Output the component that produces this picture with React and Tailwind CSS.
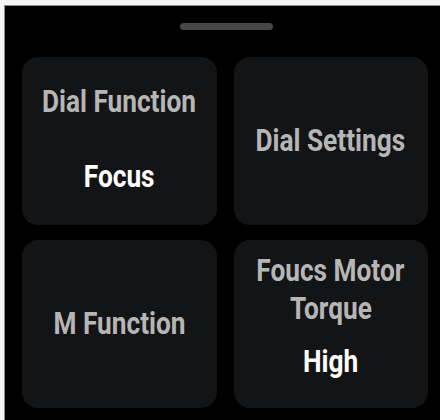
import React from 'react';

const FONT = { fontFamily: 'Roboto, "Noto Sans", sans-serif' };

const Line = ({ children, className = '' }) => (
  <span className={`inline-block whitespace-nowrap scale-x-[0.82] text-[32px] leading-[38px] font-bold ${className}`}>
    {children}
  </span>
);

const Card = ({ children, className = '' }) => (
  <div className={`h-[168px] rounded-[16px] bg-[#131416] flex flex-col items-center text-center ${className}`}>
    {children}
  </div>
);

export default function App() {
  return (
    <div className="w-[440px] h-[420px] bg-[#f4f4f4] pt-[5px] pl-[4px] overflow-hidden" style={FONT}>
      <div className="w-full h-full bg-black border-t border-l border-[#8f8f8f] pl-[17px] pr-[12px]">
        <div className="pt-[17px] flex justify-center pl-[2px]">
          <div className="w-[93px] h-[7px] rounded-full bg-[#474747]" />
        </div>
        <div className="mt-[27px] grid grid-cols-2 gap-x-[17px] gap-y-[15px]">
          <Card className="pt-[25px]">
            <Line className="text-[#b6b6b6]">Dial Function</Line>
            <Line className="mt-[37px] text-white">Focus</Line>
          </Card>
          <Card className="pt-[64px]">
            <Line className="text-[#b6b6b6]">Dial Settings</Line>
          </Card>
          <Card className="pt-[64px]">
            <Line className="text-[#b6b6b6]">M Function</Line>
          </Card>
          <Card className="pt-[11px]">
            <Line className="text-[#b6b6b6]">Foucs Motor</Line>
            <Line className="text-[#b6b6b6]">Torque</Line>
            <Line className="mt-[15px] text-white">High</Line>
          </Card>
        </div>
      </div>
    </div>
  );
}
